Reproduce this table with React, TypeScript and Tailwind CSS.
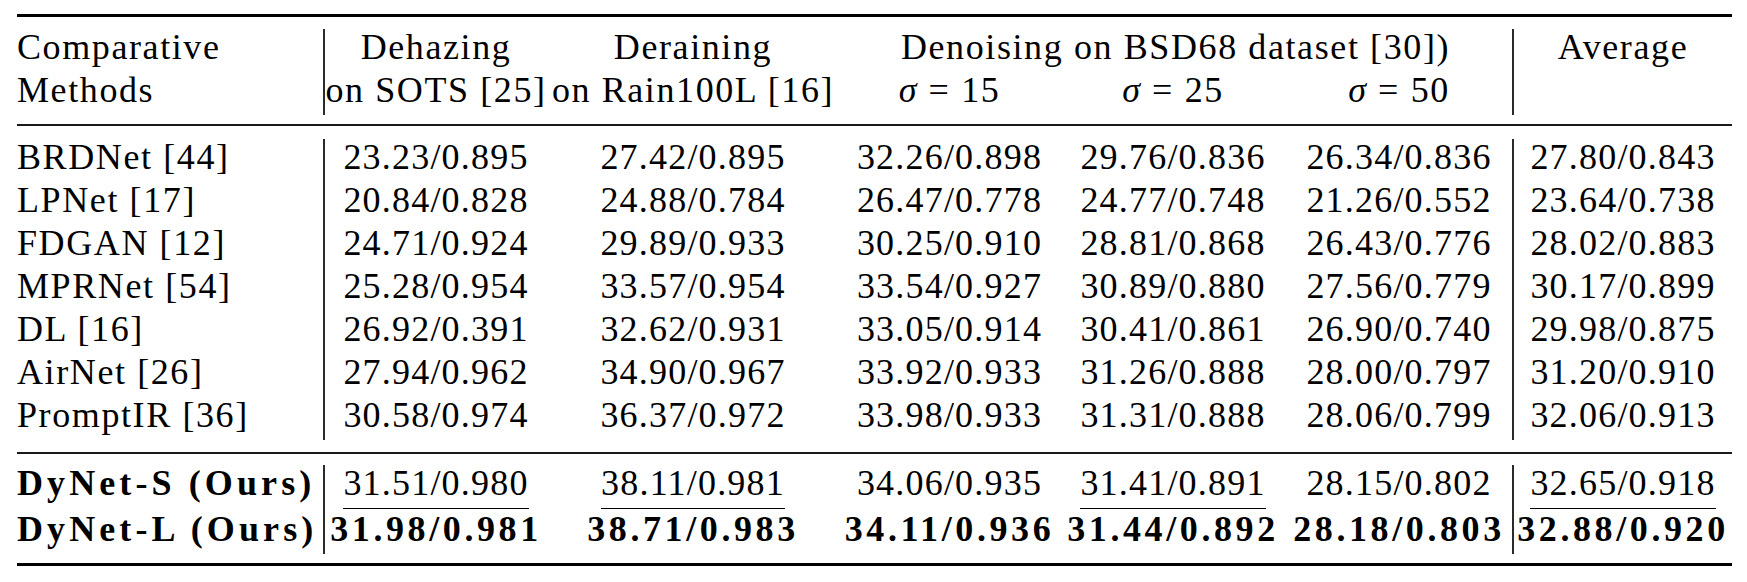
const cols = "grid grid-cols-[306px_224px_292px_221px_226px_226px_220px]";

type Cell = { v: string; u?: boolean };

const rows: { name: string; vals: string[] }[] = [
  { name: "BRDNet [44]", vals: ["23.23/0.895", "27.42/0.895", "32.26/0.898", "29.76/0.836", "26.34/0.836", "27.80/0.843"] },
  { name: "LPNet [17]", vals: ["20.84/0.828", "24.88/0.784", "26.47/0.778", "24.77/0.748", "21.26/0.552", "23.64/0.738"] },
  { name: "FDGAN [12]", vals: ["24.71/0.924", "29.89/0.933", "30.25/0.910", "28.81/0.868", "26.43/0.776", "28.02/0.883"] },
  { name: "MPRNet [54]", vals: ["25.28/0.954", "33.57/0.954", "33.54/0.927", "30.89/0.880", "27.56/0.779", "30.17/0.899"] },
  { name: "DL [16]", vals: ["26.92/0.391", "32.62/0.931", "33.05/0.914", "30.41/0.861", "26.90/0.740", "29.98/0.875"] },
  { name: "AirNet [26]", vals: ["27.94/0.962", "34.90/0.967", "33.92/0.933", "31.26/0.888", "28.00/0.797", "31.20/0.910"] },
  { name: "PromptIR [36]", vals: ["30.58/0.974", "36.37/0.972", "33.98/0.933", "31.31/0.888", "28.06/0.799", "32.06/0.913"] },
];

const small: Cell[] = [
  { v: "31.51/0.980", u: true },
  { v: "38.11/0.981", u: true },
  { v: "34.06/0.935" },
  { v: "31.41/0.891", u: true },
  { v: "28.15/0.802" },
  { v: "32.65/0.918", u: true },
];

const large = ["31.98/0.981", "38.71/0.983", "34.11/0.936", "31.44/0.892", "28.18/0.803", "32.88/0.920"];

// column 1 and 6 carry the vertical rules
const edge = (i: number) => (i === 0 || i === 5 ? "border-l-2 border-[#2a2a2a]" : "");

function Sigma({ n }: { n: string }) {
  return (
    <span>
      <i>σ</i> = {n}
    </span>
  );
}

export default function App() {
  return (
    <div className="min-h-screen bg-white text-black [font-family:'Liberation_Serif',serif] text-[36px] leading-[36px] tracking-[1.2px]">
      <div className="w-[1715px] ml-[17px] pt-[14px]">
        <div className="h-[3px] bg-black" />

        {/* header */}
        <div className={`${cols} mt-[12px] whitespace-nowrap tracking-[1.6px]`}>
          <div className="h-[43px]">Comparative</div>
          <div className={`h-[43px] text-center ${edge(0)}`}>Dehazing</div>
          <div className="h-[43px] text-center">Deraining</div>
          <div className="col-span-3 h-[43px] text-center">Denoising on BSD68 dataset [30])</div>
          <div className={`h-[43px] text-center ${edge(5)}`}>Average</div>

          <div className="h-[43px]">Methods</div>
          <div className={`h-[43px] text-center ${edge(0)}`}>on SOTS [25]</div>
          <div className="h-[43px] text-center">on Rain100L [16]</div>
          <div className="h-[43px] text-center"><Sigma n="15" /></div>
          <div className="h-[43px] text-center"><Sigma n="25" /></div>
          <div className="h-[43px] text-center"><Sigma n="50" /></div>
          <div className={`h-[43px] ${edge(5)}`} />
        </div>

        <div className="mt-[9px] h-[2px] bg-[#1a1a1a]" />

        {/* baselines */}
        <div className={`${cols} mt-[13px] whitespace-nowrap`}>
          {rows.map((r) => (
            <div key={r.name} className="contents">
              <div className="h-[43px] tracking-[1.6px]">{r.name}</div>
              {r.vals.map((v, i) => (
                <div key={i} className={`h-[43px] text-center ${edge(i)}`}>
                  {v}
                </div>
              ))}
            </div>
          ))}
        </div>

        <div className="mt-[12px] h-[2px] bg-[#1a1a1a]" />

        {/* ours */}
        <div className={`${cols} mt-[11px] whitespace-nowrap`}>
          <div className="h-[46px] font-bold tracking-[4.1px]">DyNet-S (Ours)</div>
          {small.map((c, i) => (
            <div key={i} className={`h-[46px] text-center ${edge(i)}`}>
              {c.u ? (
                <span className="inline-block border-b-[1.5px] border-black pb-[7px]">{c.v}</span>
              ) : (
                c.v
              )}
            </div>
          ))}

          <div className="h-[43px] font-bold tracking-[4.1px]">DyNet-L (Ours)</div>
          {large.map((v, i) => (
            <div key={i} className={`h-[43px] text-center font-bold tracking-[3.6px] ${edge(i)}`}>
              {v}
            </div>
          ))}
        </div>

        <div className="mt-[9px] h-[3px] bg-black" />
      </div>
    </div>
  );
}
